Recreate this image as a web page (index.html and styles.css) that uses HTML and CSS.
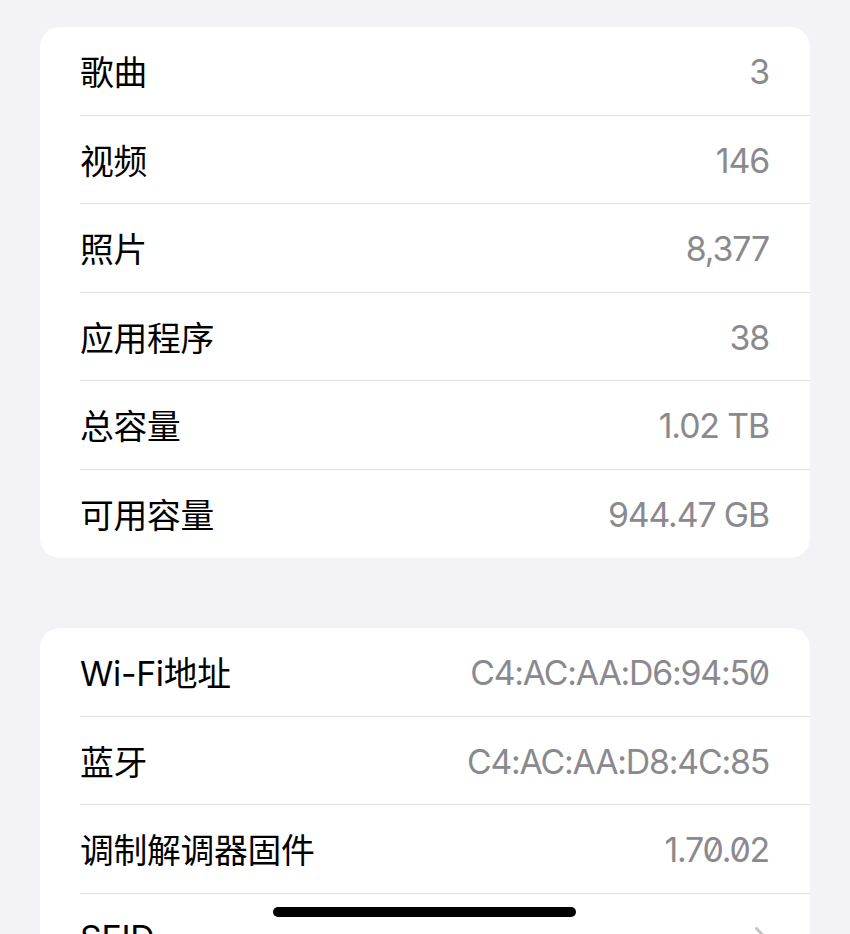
FILE: index.html
```html
<!DOCTYPE html>
<html lang="zh-CN">
<head>
<meta charset="utf-8">
<title>关于本机</title>
<link rel="stylesheet" href="styles.css">
</head>
<body>
<main class="page">
  <section class="group">
    <div class="row"><span class="label">歌曲</span><span class="value">3</span></div>
    <div class="row"><span class="label">视频</span><span class="value">146</span></div>
    <div class="row"><span class="label">照片</span><span class="value">8,377</span></div>
    <div class="row"><span class="label">应用程序</span><span class="value">38</span></div>
    <div class="row"><span class="label">总容量</span><span class="value">1.02 TB</span></div>
    <div class="row"><span class="label">可用容量</span><span class="value">944.47 GB</span></div>
  </section>
  <section class="group">
    <div class="row"><span class="label">Wi-Fi地址</span><span class="value mono">C4:AC:AA:D6:94:50</span></div>
    <div class="row"><span class="label">蓝牙</span><span class="value mono">C4:AC:AA:D8:4C:85</span></div>
    <div class="row"><span class="label">调制解调器固件</span><span class="value mono">1.70.02</span></div>
    <div class="row"><span class="label">SEID</span>
      <svg class="chevron" width="14" height="24" viewBox="0 0 14 24"><path d="M2.5 2.5 L11.5 12 L2.5 21.5" fill="none" stroke="#c4c4c7" stroke-width="3" stroke-linecap="round" stroke-linejoin="round"/></svg>
    </div>
  </section>
</main>
<div class="home-indicator"></div>
</body>
</html>
```

FILE: styles.css
```css
html, body {
  margin: 0;
  padding: 0;
  height: 934px;
  overflow: hidden;
  background: #f2f2f7;
}
body {
  font-family: Inter, "Noto Sans CJK SC", "Noto Sans", sans-serif;
  -webkit-font-smoothing: antialiased;
}
.page {
  display: flex;
  flex-direction: column;
  gap: 70px;
  padding: 27px 40px 0 40px;
}
.group {
  background: #ffffff;
  border-radius: 20px;
  overflow: hidden;
}
.row {
  display: flex;
  align-items: center;
  justify-content: space-between;
  height: 88.5px;
  box-sizing: border-box;
  margin-left: 40px;
  padding-right: 41px;
  border-bottom: 1px solid #e3e3e6;
}
.row:last-child {
  border-bottom: none;
}
.label {
  font-size: 33.8px;
  color: #000;
  letter-spacing: -0.3px;
}
.value {
  font-size: 33.8px;
  color: #8a8a8e;
  letter-spacing: -1.1px;
  padding-top: 2px;
}
.mono {
  font-feature-settings: "zero" 1;
  letter-spacing: -1.2px;
}
.chevron {
  display: block;
  margin-right: 1px;
}
.home-indicator {
  position: fixed;
  left: 273px;
  bottom: 17px;
  width: 303px;
  height: 10px;
  border-radius: 5px;
  background: #000;
}
```
